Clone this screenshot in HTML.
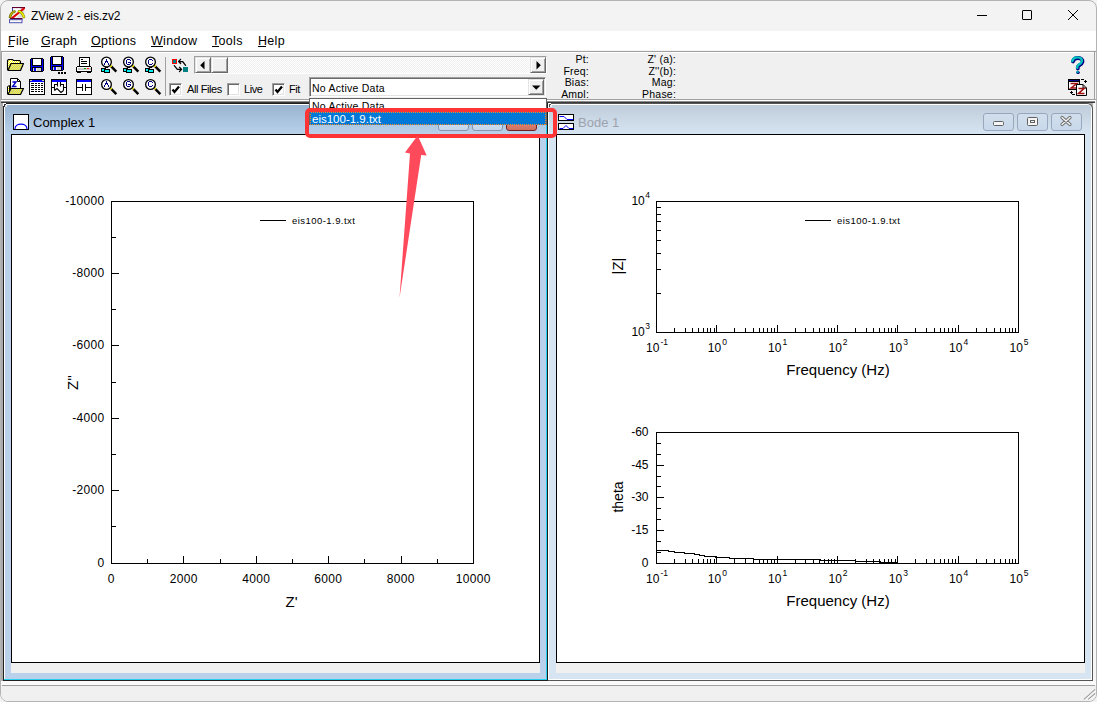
<!DOCTYPE html>
<html><head><meta charset="utf-8">
<style>
*{margin:0;padding:0;box-sizing:border-box}
html,body{width:1097px;height:702px;overflow:hidden;background:#f2f4f4;font-family:"Liberation Sans",sans-serif;position:relative}
.a{position:absolute}
.t11{font-size:11px;color:#000;white-space:nowrap;line-height:13px;letter-spacing:-0.4px}
.menu{font-size:12.5px;color:#000;white-space:nowrap;line-height:15px;letter-spacing:0.3px}
.ul{position:absolute;height:1px;background:#000}
svg{position:absolute;left:0;top:0;overflow:visible}
.cb{position:absolute;width:13px;height:13px;background:#fff;border-top:1px solid #a0a0a0;border-left:1px solid #a0a0a0;border-right:1px solid #fff;border-bottom:1px solid #fff;box-shadow:inset 1px 1px 0 #696969,inset -1px -1px 0 #e3e3e3}
.btn3d{position:absolute;background:#f0f0f0;border-top:1px solid #e3e3e3;border-left:1px solid #e3e3e3;border-right:1px solid #696969;border-bottom:1px solid #696969;box-shadow:inset 1px 1px 0 #fff,inset -1px -1px 0 #a0a0a0}
.il{letter-spacing:0.2px;font-size:10.5px}
.tbtn{position:absolute;top:10px;width:31px;height:18px;border:1px solid #8797b0;border-radius:3px;background:linear-gradient(#d6e2f0,#c5d6ea)}
</style></head><body>
<!-- main window -->
<div class="a" style="left:0;top:0;width:1097px;height:702px;border:1px solid #b4b4b4;border-radius:8px;background:#f3f3f3;overflow:hidden">
</div>
<!-- title bar -->
<svg width="17" height="17" style="left:9px;top:7px" viewBox="0 0 17 17">
  <rect x="3" y="0" width="13" height="1.3" fill="#600030"/>
  <rect x="3.5" y="1.3" width="8" height="2.4" fill="#fff"/>
  <rect x="3" y="1" width="1" height="3.5" fill="#4040a0"/>
  <path d="M16,1.5 L8,10.5 L15,10.5 L15.5,2 Z" fill="#d8d8d8"/>
  <line x1="15.5" y1="1" x2="2" y2="12" stroke="#e00000" stroke-width="2.2"/>
  <rect x="1" y="11" width="12.5" height="1.7" fill="#600030"/>
  <rect x="0.5" y="12.7" width="12.5" height="3" fill="#fff" stroke="#5050b0" stroke-width="1"/>
  <path d="M1,10 Q2.5,5 5.5,4.5" fill="none" stroke="#606000" stroke-width="2.6" stroke-linecap="round"/>
  <path d="M1,10 Q2.5,5 5.5,4.5" fill="none" stroke="#b8b000" stroke-width="1.4" stroke-linecap="round"/>
  <path d="M10,4.3 Q13,5 15,10" fill="none" stroke="#808000" stroke-width="2.6" stroke-linecap="round"/>
  <path d="M10,4.3 Q13,5 15,10" fill="none" stroke="#f0f000" stroke-width="1.6" stroke-linecap="round"/>
</svg>
<div class="a" style="left:31px;top:8px;font-size:12px;color:#000;white-space:nowrap;line-height:15px;letter-spacing:-0.1px;margin-top:1px">ZView 2 - eis.zv2</div>
<div class="a" style="left:977px;top:15px;width:10px;height:1px;background:#000"></div>
<div class="a" style="left:1022px;top:10px;width:10px;height:10px;border:1px solid #000;border-radius:1px"></div>
<svg width="12" height="12" style="left:1067px;top:9px" viewBox="0 0 12 12"><path d="M1,1 L11,11 M11,1 L1,11" stroke="#000" stroke-width="1"/></svg>

<!-- menu bar -->
<div class="a" style="left:1px;top:31px;width:1095px;height:20px;background:#fff"></div>
<div class="a menu" style="left:8px;top:34px">File</div><div class="ul" style="left:8px;top:46px;width:6px"></div>
<div class="a menu" style="left:41px;top:34px">Graph</div><div class="ul" style="left:41px;top:46px;width:9px"></div>
<div class="a menu" style="left:91px;top:34px">Options</div><div class="ul" style="left:91px;top:46px;width:10px"></div>
<div class="a menu" style="left:151px;top:34px">Window</div><div class="ul" style="left:151px;top:46px;width:12px"></div>
<div class="a menu" style="left:212px;top:34px">Tools</div><div class="ul" style="left:212px;top:46px;width:7px"></div>
<div class="a menu" style="left:258px;top:34px">Help</div><div class="ul" style="left:258px;top:46px;width:8px"></div>

<!-- toolbar -->
<div class="a" style="left:1px;top:51px;width:1095px;height:1px;background:#a0a0a0"></div>
<div class="a" style="left:1px;top:50px;width:1095px;height:1px;background:#f4f4f4"></div>
<div class="a" style="left:1px;top:52px;width:1094px;height:47px;background:#f0f0f0"></div>
<div class="a" style="left:2px;top:52px;width:1092px;height:1px;background:#fff"></div>
<div class="a" style="left:1px;top:51px;width:1px;height:49px;background:#a0a0a0"></div>
<div class="a" style="left:2px;top:52px;width:1px;height:47px;background:#fff"></div>
<div class="a" style="left:1094px;top:51px;width:1px;height:49px;background:#a0a0a0"></div>
<div class="a" style="left:1px;top:99px;width:1095px;height:1px;background:#a0a0a0"></div>
<div class="a" style="left:1px;top:100px;width:1095px;height:1px;background:#fff"></div>
<div class="a" style="left:1px;top:101px;width:1094px;height:1px;background:#8c8c8c"></div>
<div class="a" style="left:1px;top:102px;width:1094px;height:1px;background:#3a3a3a"></div>
<div class="a" style="left:165px;top:57px;width:1px;height:39px;background:#a0a0a0"></div>

<!-- MDI background -->
<div class="a" style="left:1px;top:103px;width:1095px;height:578px;background:#ababab"></div>

<!-- status bar -->
<div class="a" style="left:1px;top:681px;width:1095px;height:20px;background:#f0f0f0;border-radius:0 0 7px 7px"></div>
<div class="a" style="left:1px;top:681px;width:1095px;height:4px;background:#fafafa"></div>
<div class="a" style="left:2px;top:685px;width:1093px;height:1px;background:#a0a0a0"></div>
<svg width="14" height="14" style="left:1083px;top:687px" viewBox="0 0 14 14">
  <path d="M1,12.3 L12.2,2.3 M5.2,12.3 L12.2,6.5" stroke="#9a9a9a" stroke-width="1.1"/>
  <path d="M2,12.8 L12.6,3.3 M6.2,12.8 L12.6,7.5" stroke="#fff" stroke-width="0.7"/>
</svg>
<div class="a" style="left:1093px;top:103px;width:3px;height:578px;background:#f6f6f6"></div>
<!--WINDOWS-->
<!-- Complex 1 window (active) -->
<div class="a" style="left:3px;top:103px;width:545px;height:578px;background:#202020"></div>
<div class="a" style="left:4px;top:104px;width:543px;height:576px;background:#26d0f0"></div>
<div class="a" style="left:4px;top:104px;width:542px;height:575px;background:#fff"></div>
<div class="a" style="left:5px;top:105px;width:541px;height:574px;background:#b9d1ea"></div>
<div class="a" style="left:5px;top:105px;width:541px;height:29px;background:linear-gradient(#99b4d1,#b9d1ea)"></div>
<svg width="4" height="4" style="left:3px;top:103px" viewBox="0 0 4 4" shape-rendering="crispEdges"><rect x="0" y="0" width="3" height="1" fill="#fff"/><rect x="0" y="1" width="1" height="2" fill="#fff"/><rect x="1" y="1" width="2" height="1" fill="#303030"/><rect x="1" y="2" width="1" height="2" fill="#303030"/><rect x="2" y="2" width="2" height="2" fill="#dfe8f2"/></svg>
<div class="a" style="left:11px;top:134px;width:529px;height:529px;background:#fff;border:1px solid #000"></div>
<div class="a" style="left:11px;top:663px;width:529px;height:10px;background:#f0f0f0"></div>
<svg width="16" height="16" style="left:13px;top:114px" viewBox="0 0 16 16">
  <rect x="0.5" y="0.5" width="15" height="15" fill="#fff" stroke="#000" stroke-width="1"/>
  <path d="M2,15 C2,8.5 14,8.5 14,15" fill="none" stroke="#0000ff" stroke-width="1.2"/>
</svg>
<div class="a" style="left:33px;top:115px;font-size:13px;line-height:15px;color:#000;white-space:nowrap">Complex 1</div>
<div class="tbtn" style="left:438px;top:113px"></div>
<div class="tbtn" style="left:472px;top:113px"></div>
<div class="tbtn" style="left:506px;top:113px;border-color:#6e2020;background:linear-gradient(#e8a090,#d07060)"></div>

<!-- Bode 1 window (inactive) -->
<div class="a" style="left:548px;top:103px;width:545px;height:578px;background:#555;border-top-right-radius:6px"></div>
<div class="a" style="left:548px;top:104px;width:544px;height:576px;background:#fff;border-top-right-radius:5px"></div>
<div class="a" style="left:549px;top:105px;width:542px;height:574px;background:#d7e4f2;border-top-right-radius:4px"></div>
<div class="a" style="left:549px;top:105px;width:542px;height:29px;background:linear-gradient(#bfcddb,#d7e4f2);border-top-right-radius:4px"></div>
<svg width="4" height="4" style="left:548px;top:103px" viewBox="0 0 4 4" shape-rendering="crispEdges"><rect x="0" y="0" width="3" height="1" fill="#fff"/><rect x="0" y="1" width="1" height="2" fill="#fff"/><rect x="1" y="1" width="2" height="1" fill="#505050"/><rect x="1" y="2" width="1" height="2" fill="#505050"/><rect x="2" y="2" width="2" height="2" fill="#e8eef6"/></svg>
<div class="a" style="left:556px;top:134px;width:529px;height:529px;background:#fff;border:1px solid #000"></div>
<div class="a" style="left:556px;top:663px;width:529px;height:10px;background:#f0f0f0"></div>
<svg width="16" height="16" style="left:558px;top:114px" viewBox="0 0 16 16" shape-rendering="crispEdges">
  <rect x="0.5" y="0.5" width="15" height="6" fill="#fff" stroke="#000"/>
  <rect x="0.5" y="9.5" width="15" height="6" fill="#fff" stroke="#000"/>
  <path d="M1.5,2.5 L6,2.5 L9,5.5 L15,5.5" fill="none" stroke="#0000ff" stroke-width="1" shape-rendering="auto"/>
  <path d="M1.5,14.5 L5,14.5 L8,11.5 L11,14.5 L15,14.5" fill="none" stroke="#0000ff" stroke-width="1" shape-rendering="auto"/>
</svg>
<div class="a" style="left:578px;top:115px;font-size:13px;line-height:15px;color:#9ca3ad;white-space:nowrap">Bode 1</div>
<div class="tbtn" style="left:983px;top:113px;opacity:.75"></div>
<div class="tbtn" style="left:1017px;top:113px;opacity:.75"></div>
<div class="tbtn" style="left:1051px;top:113px;opacity:.75"></div>
<div class="a" style="left:993px;top:121px;width:11px;height:5px;border:1px solid #606060;border-radius:1.5px;background:#f4f4f4"></div>
<div class="a" style="left:1027px;top:117px;width:11px;height:9px;border:1px solid #606060;border-radius:1.5px;background:#f4f4f4"><div class="a" style="left:2px;top:2px;width:5px;height:3px;border:1px solid #606060"></div></div>
<svg width="12" height="10" style="left:1060px;top:116px" viewBox="0 0 12 10"><path d="M2,1.5 L10,8.5 M10,1.5 L2,8.5" stroke="#6a6a6a" stroke-width="3.2" stroke-linecap="round"/><path d="M2,1.5 L10,8.5 M10,1.5 L2,8.5" stroke="#f6f6f6" stroke-width="1.4" stroke-linecap="round"/></svg>

<!--PLOTS-->
<svg width="1097" height="702" viewBox="0 0 1097 702" style="left:0;top:0" font-family="Liberation Sans, sans-serif">
<g shape-rendering="crispEdges">
<rect x="111.5" y="201.5" width="362" height="362" fill="none" stroke="#000"/>
<line x1="147.5" y1="563" x2="147.5" y2="559" stroke="#000" stroke-width="1"/>
<line x1="111" y1="526.5" x2="116" y2="526.5" stroke="#000" stroke-width="1"/>
<line x1="183.5" y1="563" x2="183.5" y2="556" stroke="#000" stroke-width="1"/>
<line x1="111" y1="490.5" x2="119" y2="490.5" stroke="#000" stroke-width="1"/>
<line x1="220.5" y1="563" x2="220.5" y2="559" stroke="#000" stroke-width="1"/>
<line x1="111" y1="454.5" x2="116" y2="454.5" stroke="#000" stroke-width="1"/>
<line x1="256.5" y1="563" x2="256.5" y2="556" stroke="#000" stroke-width="1"/>
<line x1="111" y1="418.5" x2="119" y2="418.5" stroke="#000" stroke-width="1"/>
<line x1="292.5" y1="563" x2="292.5" y2="559" stroke="#000" stroke-width="1"/>
<line x1="111" y1="382.5" x2="116" y2="382.5" stroke="#000" stroke-width="1"/>
<line x1="328.5" y1="563" x2="328.5" y2="556" stroke="#000" stroke-width="1"/>
<line x1="111" y1="345.5" x2="119" y2="345.5" stroke="#000" stroke-width="1"/>
<line x1="364.5" y1="563" x2="364.5" y2="559" stroke="#000" stroke-width="1"/>
<line x1="111" y1="309.5" x2="116" y2="309.5" stroke="#000" stroke-width="1"/>
<line x1="401.5" y1="563" x2="401.5" y2="556" stroke="#000" stroke-width="1"/>
<line x1="111" y1="273.5" x2="119" y2="273.5" stroke="#000" stroke-width="1"/>
<line x1="437.5" y1="563" x2="437.5" y2="559" stroke="#000" stroke-width="1"/>
<line x1="111" y1="237.5" x2="116" y2="237.5" stroke="#000" stroke-width="1"/>
</g>
<g fill="#000">
<text x="111.3" y="583" font-size="12" text-anchor="middle" letter-spacing="0.3">0</text>
<text x="104.5" y="567" font-size="12" text-anchor="end" letter-spacing="0.3">0</text>
<text x="183.8" y="583" font-size="12" text-anchor="middle" letter-spacing="0.3">2000</text>
<text x="104.5" y="494" font-size="12" text-anchor="end" letter-spacing="0.3">-2000</text>
<text x="256.3" y="583" font-size="12" text-anchor="middle" letter-spacing="0.3">4000</text>
<text x="104.5" y="422" font-size="12" text-anchor="end" letter-spacing="0.3">-4000</text>
<text x="328.3" y="583" font-size="12" text-anchor="middle" letter-spacing="0.3">6000</text>
<text x="104.5" y="349" font-size="12" text-anchor="end" letter-spacing="0.3">-6000</text>
<text x="400.8" y="583" font-size="12" text-anchor="middle" letter-spacing="0.3">8000</text>
<text x="104.5" y="277" font-size="12" text-anchor="end" letter-spacing="0.3">-8000</text>
<text x="473.3" y="583" font-size="12" text-anchor="middle" letter-spacing="0.3">10000</text>
<text x="104.5" y="205" font-size="12" text-anchor="end" letter-spacing="0.3">-10000</text>
<text x="291.5" y="607" font-size="15" text-anchor="middle" >Z'</text>
<text transform="translate(78,382.5) rotate(-90)" font-size="15" text-anchor="middle">Z''</text>
</g>
<g shape-rendering="crispEdges">
<line x1="260" y1="220.5" x2="286" y2="220.5" stroke="#000" stroke-width="1"/>
</g>
<text x="292" y="224" font-size="9.5" text-anchor="start" letter-spacing="0.45">eis100-1.9.txt</text>
<g shape-rendering="crispEdges">
<rect x="656.5" y="201.5" width="362" height="131" fill="none" stroke="#000"/>
<line x1="674.5" y1="332" x2="674.5" y2="328" stroke="#000" stroke-width="1"/>
<line x1="685.5" y1="332" x2="685.5" y2="328" stroke="#000" stroke-width="1"/>
<line x1="692.5" y1="332" x2="692.5" y2="328" stroke="#000" stroke-width="1"/>
<line x1="698.5" y1="332" x2="698.5" y2="328" stroke="#000" stroke-width="1"/>
<line x1="703.5" y1="332" x2="703.5" y2="328" stroke="#000" stroke-width="1"/>
<line x1="707.5" y1="332" x2="707.5" y2="328" stroke="#000" stroke-width="1"/>
<line x1="710.5" y1="332" x2="710.5" y2="328" stroke="#000" stroke-width="1"/>
<line x1="714.5" y1="332" x2="714.5" y2="328" stroke="#000" stroke-width="1"/>
<line x1="716.5" y1="332" x2="716.5" y2="325" stroke="#000" stroke-width="1"/>
<line x1="734.5" y1="332" x2="734.5" y2="328" stroke="#000" stroke-width="1"/>
<line x1="745.5" y1="332" x2="745.5" y2="328" stroke="#000" stroke-width="1"/>
<line x1="753.5" y1="332" x2="753.5" y2="328" stroke="#000" stroke-width="1"/>
<line x1="759.5" y1="332" x2="759.5" y2="328" stroke="#000" stroke-width="1"/>
<line x1="763.5" y1="332" x2="763.5" y2="328" stroke="#000" stroke-width="1"/>
<line x1="767.5" y1="332" x2="767.5" y2="328" stroke="#000" stroke-width="1"/>
<line x1="771.5" y1="332" x2="771.5" y2="328" stroke="#000" stroke-width="1"/>
<line x1="774.5" y1="332" x2="774.5" y2="328" stroke="#000" stroke-width="1"/>
<line x1="777.5" y1="332" x2="777.5" y2="325" stroke="#000" stroke-width="1"/>
<line x1="795.5" y1="332" x2="795.5" y2="328" stroke="#000" stroke-width="1"/>
<line x1="805.5" y1="332" x2="805.5" y2="328" stroke="#000" stroke-width="1"/>
<line x1="813.5" y1="332" x2="813.5" y2="328" stroke="#000" stroke-width="1"/>
<line x1="819.5" y1="332" x2="819.5" y2="328" stroke="#000" stroke-width="1"/>
<line x1="824.5" y1="332" x2="824.5" y2="328" stroke="#000" stroke-width="1"/>
<line x1="828.5" y1="332" x2="828.5" y2="328" stroke="#000" stroke-width="1"/>
<line x1="831.5" y1="332" x2="831.5" y2="328" stroke="#000" stroke-width="1"/>
<line x1="834.5" y1="332" x2="834.5" y2="328" stroke="#000" stroke-width="1"/>
<line x1="837.5" y1="332" x2="837.5" y2="325" stroke="#000" stroke-width="1"/>
<line x1="855.5" y1="332" x2="855.5" y2="328" stroke="#000" stroke-width="1"/>
<line x1="866.5" y1="332" x2="866.5" y2="328" stroke="#000" stroke-width="1"/>
<line x1="873.5" y1="332" x2="873.5" y2="328" stroke="#000" stroke-width="1"/>
<line x1="879.5" y1="332" x2="879.5" y2="328" stroke="#000" stroke-width="1"/>
<line x1="884.5" y1="332" x2="884.5" y2="328" stroke="#000" stroke-width="1"/>
<line x1="888.5" y1="332" x2="888.5" y2="328" stroke="#000" stroke-width="1"/>
<line x1="891.5" y1="332" x2="891.5" y2="328" stroke="#000" stroke-width="1"/>
<line x1="895.5" y1="332" x2="895.5" y2="328" stroke="#000" stroke-width="1"/>
<line x1="897.5" y1="332" x2="897.5" y2="325" stroke="#000" stroke-width="1"/>
<line x1="915.5" y1="332" x2="915.5" y2="328" stroke="#000" stroke-width="1"/>
<line x1="926.5" y1="332" x2="926.5" y2="328" stroke="#000" stroke-width="1"/>
<line x1="934.5" y1="332" x2="934.5" y2="328" stroke="#000" stroke-width="1"/>
<line x1="940.5" y1="332" x2="940.5" y2="328" stroke="#000" stroke-width="1"/>
<line x1="944.5" y1="332" x2="944.5" y2="328" stroke="#000" stroke-width="1"/>
<line x1="948.5" y1="332" x2="948.5" y2="328" stroke="#000" stroke-width="1"/>
<line x1="952.5" y1="332" x2="952.5" y2="328" stroke="#000" stroke-width="1"/>
<line x1="955.5" y1="332" x2="955.5" y2="328" stroke="#000" stroke-width="1"/>
<line x1="958.5" y1="332" x2="958.5" y2="325" stroke="#000" stroke-width="1"/>
<line x1="976.5" y1="332" x2="976.5" y2="328" stroke="#000" stroke-width="1"/>
<line x1="986.5" y1="332" x2="986.5" y2="328" stroke="#000" stroke-width="1"/>
<line x1="994.5" y1="332" x2="994.5" y2="328" stroke="#000" stroke-width="1"/>
<line x1="1000.5" y1="332" x2="1000.5" y2="328" stroke="#000" stroke-width="1"/>
<line x1="1005.5" y1="332" x2="1005.5" y2="328" stroke="#000" stroke-width="1"/>
<line x1="1009.5" y1="332" x2="1009.5" y2="328" stroke="#000" stroke-width="1"/>
<line x1="1012.5" y1="332" x2="1012.5" y2="328" stroke="#000" stroke-width="1"/>
<line x1="1015.5" y1="332" x2="1015.5" y2="328" stroke="#000" stroke-width="1"/>
</g>
<text x="657.0" y="352" font-size="12" text-anchor="middle">10<tspan font-size="8.5" dy="-7" dx="1">-1</tspan></text>
<text x="717.3333333333334" y="352" font-size="12" text-anchor="middle">10<tspan font-size="8.5" dy="-7" dx="1">0</tspan></text>
<text x="777.6666666666666" y="352" font-size="12" text-anchor="middle">10<tspan font-size="8.5" dy="-7" dx="1">1</tspan></text>
<text x="838.0" y="352" font-size="12" text-anchor="middle">10<tspan font-size="8.5" dy="-7" dx="1">2</tspan></text>
<text x="898.3333333333334" y="352" font-size="12" text-anchor="middle">10<tspan font-size="8.5" dy="-7" dx="1">3</tspan></text>
<text x="958.6666666666667" y="352" font-size="12" text-anchor="middle">10<tspan font-size="8.5" dy="-7" dx="1">4</tspan></text>
<text x="1019.0" y="352" font-size="12" text-anchor="middle">10<tspan font-size="8.5" dy="-7" dx="1">5</tspan></text>
<text x="838" y="375" font-size="15" text-anchor="middle" >Frequency (Hz)</text>
<g shape-rendering="crispEdges">
<rect x="656.5" y="432.5" width="362" height="131" fill="none" stroke="#000"/>
<line x1="674.5" y1="563" x2="674.5" y2="559" stroke="#000" stroke-width="1"/>
<line x1="685.5" y1="563" x2="685.5" y2="559" stroke="#000" stroke-width="1"/>
<line x1="692.5" y1="563" x2="692.5" y2="559" stroke="#000" stroke-width="1"/>
<line x1="698.5" y1="563" x2="698.5" y2="559" stroke="#000" stroke-width="1"/>
<line x1="703.5" y1="563" x2="703.5" y2="559" stroke="#000" stroke-width="1"/>
<line x1="707.5" y1="563" x2="707.5" y2="559" stroke="#000" stroke-width="1"/>
<line x1="710.5" y1="563" x2="710.5" y2="559" stroke="#000" stroke-width="1"/>
<line x1="714.5" y1="563" x2="714.5" y2="559" stroke="#000" stroke-width="1"/>
<line x1="716.5" y1="563" x2="716.5" y2="556" stroke="#000" stroke-width="1"/>
<line x1="734.5" y1="563" x2="734.5" y2="559" stroke="#000" stroke-width="1"/>
<line x1="745.5" y1="563" x2="745.5" y2="559" stroke="#000" stroke-width="1"/>
<line x1="753.5" y1="563" x2="753.5" y2="559" stroke="#000" stroke-width="1"/>
<line x1="759.5" y1="563" x2="759.5" y2="559" stroke="#000" stroke-width="1"/>
<line x1="763.5" y1="563" x2="763.5" y2="559" stroke="#000" stroke-width="1"/>
<line x1="767.5" y1="563" x2="767.5" y2="559" stroke="#000" stroke-width="1"/>
<line x1="771.5" y1="563" x2="771.5" y2="559" stroke="#000" stroke-width="1"/>
<line x1="774.5" y1="563" x2="774.5" y2="559" stroke="#000" stroke-width="1"/>
<line x1="777.5" y1="563" x2="777.5" y2="556" stroke="#000" stroke-width="1"/>
<line x1="795.5" y1="563" x2="795.5" y2="559" stroke="#000" stroke-width="1"/>
<line x1="805.5" y1="563" x2="805.5" y2="559" stroke="#000" stroke-width="1"/>
<line x1="813.5" y1="563" x2="813.5" y2="559" stroke="#000" stroke-width="1"/>
<line x1="819.5" y1="563" x2="819.5" y2="559" stroke="#000" stroke-width="1"/>
<line x1="824.5" y1="563" x2="824.5" y2="559" stroke="#000" stroke-width="1"/>
<line x1="828.5" y1="563" x2="828.5" y2="559" stroke="#000" stroke-width="1"/>
<line x1="831.5" y1="563" x2="831.5" y2="559" stroke="#000" stroke-width="1"/>
<line x1="834.5" y1="563" x2="834.5" y2="559" stroke="#000" stroke-width="1"/>
<line x1="837.5" y1="563" x2="837.5" y2="556" stroke="#000" stroke-width="1"/>
<line x1="855.5" y1="563" x2="855.5" y2="559" stroke="#000" stroke-width="1"/>
<line x1="866.5" y1="563" x2="866.5" y2="559" stroke="#000" stroke-width="1"/>
<line x1="873.5" y1="563" x2="873.5" y2="559" stroke="#000" stroke-width="1"/>
<line x1="879.5" y1="563" x2="879.5" y2="559" stroke="#000" stroke-width="1"/>
<line x1="884.5" y1="563" x2="884.5" y2="559" stroke="#000" stroke-width="1"/>
<line x1="888.5" y1="563" x2="888.5" y2="559" stroke="#000" stroke-width="1"/>
<line x1="891.5" y1="563" x2="891.5" y2="559" stroke="#000" stroke-width="1"/>
<line x1="895.5" y1="563" x2="895.5" y2="559" stroke="#000" stroke-width="1"/>
<line x1="897.5" y1="563" x2="897.5" y2="556" stroke="#000" stroke-width="1"/>
<line x1="915.5" y1="563" x2="915.5" y2="559" stroke="#000" stroke-width="1"/>
<line x1="926.5" y1="563" x2="926.5" y2="559" stroke="#000" stroke-width="1"/>
<line x1="934.5" y1="563" x2="934.5" y2="559" stroke="#000" stroke-width="1"/>
<line x1="940.5" y1="563" x2="940.5" y2="559" stroke="#000" stroke-width="1"/>
<line x1="944.5" y1="563" x2="944.5" y2="559" stroke="#000" stroke-width="1"/>
<line x1="948.5" y1="563" x2="948.5" y2="559" stroke="#000" stroke-width="1"/>
<line x1="952.5" y1="563" x2="952.5" y2="559" stroke="#000" stroke-width="1"/>
<line x1="955.5" y1="563" x2="955.5" y2="559" stroke="#000" stroke-width="1"/>
<line x1="958.5" y1="563" x2="958.5" y2="556" stroke="#000" stroke-width="1"/>
<line x1="976.5" y1="563" x2="976.5" y2="559" stroke="#000" stroke-width="1"/>
<line x1="986.5" y1="563" x2="986.5" y2="559" stroke="#000" stroke-width="1"/>
<line x1="994.5" y1="563" x2="994.5" y2="559" stroke="#000" stroke-width="1"/>
<line x1="1000.5" y1="563" x2="1000.5" y2="559" stroke="#000" stroke-width="1"/>
<line x1="1005.5" y1="563" x2="1005.5" y2="559" stroke="#000" stroke-width="1"/>
<line x1="1009.5" y1="563" x2="1009.5" y2="559" stroke="#000" stroke-width="1"/>
<line x1="1012.5" y1="563" x2="1012.5" y2="559" stroke="#000" stroke-width="1"/>
<line x1="1015.5" y1="563" x2="1015.5" y2="559" stroke="#000" stroke-width="1"/>
</g>
<text x="657.0" y="583" font-size="12" text-anchor="middle">10<tspan font-size="8.5" dy="-7" dx="1">-1</tspan></text>
<text x="717.3333333333334" y="583" font-size="12" text-anchor="middle">10<tspan font-size="8.5" dy="-7" dx="1">0</tspan></text>
<text x="777.6666666666666" y="583" font-size="12" text-anchor="middle">10<tspan font-size="8.5" dy="-7" dx="1">1</tspan></text>
<text x="838.0" y="583" font-size="12" text-anchor="middle">10<tspan font-size="8.5" dy="-7" dx="1">2</tspan></text>
<text x="898.3333333333334" y="583" font-size="12" text-anchor="middle">10<tspan font-size="8.5" dy="-7" dx="1">3</tspan></text>
<text x="958.6666666666667" y="583" font-size="12" text-anchor="middle">10<tspan font-size="8.5" dy="-7" dx="1">4</tspan></text>
<text x="1019.0" y="583" font-size="12" text-anchor="middle">10<tspan font-size="8.5" dy="-7" dx="1">5</tspan></text>
<text x="838" y="606" font-size="15" text-anchor="middle" >Frequency (Hz)</text>
<g shape-rendering="crispEdges">
<line x1="656" y1="293.5" x2="661" y2="293.5" stroke="#000" stroke-width="1"/>
<line x1="656" y1="269.5" x2="661" y2="269.5" stroke="#000" stroke-width="1"/>
<line x1="656" y1="253.5" x2="661" y2="253.5" stroke="#000" stroke-width="1"/>
<line x1="656" y1="240.5" x2="661" y2="240.5" stroke="#000" stroke-width="1"/>
<line x1="656" y1="230.5" x2="661" y2="230.5" stroke="#000" stroke-width="1"/>
<line x1="656" y1="221.5" x2="661" y2="221.5" stroke="#000" stroke-width="1"/>
<line x1="656" y1="214.5" x2="661" y2="214.5" stroke="#000" stroke-width="1"/>
<line x1="656" y1="207.5" x2="661" y2="207.5" stroke="#000" stroke-width="1"/>
</g>
<text x="650" y="336" font-size="12" text-anchor="end">10<tspan font-size="8.5" dy="-7" dx="0.5">3</tspan></text>
<text x="650" y="205" font-size="12" text-anchor="end">10<tspan font-size="8.5" dy="-7" dx="0.5">4</tspan></text>
<text transform="translate(623,266) rotate(-90)" font-size="15" text-anchor="middle">|Z|</text>
<g shape-rendering="crispEdges">
<line x1="805" y1="220.5" x2="831" y2="220.5" stroke="#000" stroke-width="1"/>
</g>
<text x="837" y="224" font-size="9.5" text-anchor="start" letter-spacing="0.45">eis100-1.9.txt</text>
<g shape-rendering="crispEdges">
<line x1="656" y1="552.5" x2="661" y2="552.5" stroke="#000" stroke-width="1"/>
<line x1="656" y1="541.5" x2="661" y2="541.5" stroke="#000" stroke-width="1"/>
<line x1="656" y1="530.5" x2="664" y2="530.5" stroke="#000" stroke-width="1"/>
<line x1="656" y1="519.5" x2="661" y2="519.5" stroke="#000" stroke-width="1"/>
<line x1="656" y1="508.5" x2="661" y2="508.5" stroke="#000" stroke-width="1"/>
<line x1="656" y1="497.5" x2="664" y2="497.5" stroke="#000" stroke-width="1"/>
<line x1="656" y1="486.5" x2="661" y2="486.5" stroke="#000" stroke-width="1"/>
<line x1="656" y1="476.5" x2="661" y2="476.5" stroke="#000" stroke-width="1"/>
<line x1="656" y1="465.5" x2="664" y2="465.5" stroke="#000" stroke-width="1"/>
<line x1="656" y1="454.5" x2="661" y2="454.5" stroke="#000" stroke-width="1"/>
<line x1="656" y1="443.5" x2="661" y2="443.5" stroke="#000" stroke-width="1"/>
</g>
<text x="648.5" y="567" font-size="12" text-anchor="end" >0</text>
<text x="648.5" y="534" font-size="12" text-anchor="end" >-15</text>
<text x="648.5" y="501" font-size="12" text-anchor="end" >-30</text>
<text x="648.5" y="469" font-size="12" text-anchor="end" >-45</text>
<text x="648.5" y="436" font-size="12" text-anchor="end" >-60</text>
<text transform="translate(623,497) rotate(-90)" font-size="14" text-anchor="middle">theta</text>
<path d="M656,550.5 L668,550.5 L668,551.5 L674,551.5 L674,552.5 L684,552.5 L684,553.5 L694,553.5 L694,554.5 L699,554.5 L699,555.5 L704,555.5 L704,556.5 L715,556.5 L715,557.5 L729,557.5 L729,558.5 L753,558.5 L753,559.5 L820,559.5 L820,560.5 L855,560.5 L855,561.5 L880,561.5 L880,562.5 L897,562.5" fill="none" stroke="#000" stroke-width="1" shape-rendering="crispEdges"/>
</svg>
<!--TOOLBAR-->
<!-- toolbar icons row 1 -->
<svg width="0" height="0" style="position:absolute"><defs>
<pattern id="py" width="2" height="2" patternUnits="userSpaceOnUse"><rect width="2" height="2" fill="#ffff00"/><rect width="1" height="1" fill="#fff"/><rect x="1" y="1" width="1" height="1" fill="#fff"/></pattern>
<pattern id="pg" width="2" height="2" patternUnits="userSpaceOnUse"><rect width="2" height="2" fill="#ffff00"/><rect width="1" height="1" fill="#c0c0c0"/><rect x="1" y="1" width="1" height="1" fill="#c0c0c0"/></pattern>
</defs></svg>
<svg width="18" height="13" style="left:7px;top:59px" viewBox="0 0 18 13">
  <path d="M0.5,11 V1.5 L1.5,0.5 H5.5 L6.5,1.5 H12.5 L13.5,2.5 V5" fill="url(#py)" stroke="#000" stroke-width="1.1"/>
  <path d="M1,11.5 L4,4.5 H16.5 L13.5,11.5 Z" fill="url(#pg)" stroke="#000" stroke-width="1.2" stroke-linejoin="round"/>
</svg>
<svg width="14" height="14" style="left:30px;top:58px" viewBox="0 0 14 14" shape-rendering="crispEdges">
  <path d="M1,0 H13 V1 H14 V13 H13 V14 H1 V13 H0 V1 H1 Z" fill="#000"/>
  <rect x="1" y="1" width="12" height="12" fill="#0000ff"/>
  <rect x="2" y="0" width="10" height="8" fill="#000"/>
  <rect x="3" y="1" width="8" height="6" fill="#fff"/>
  <rect x="2" y="9" width="10" height="5" fill="#000"/>
  <rect x="3" y="10" width="8" height="3" fill="#d0d0d0"/>
  <rect x="4" y="10" width="2" height="3" fill="#0000ff"/>
  <rect x="6" y="10" width="1" height="3" fill="#fff"/>
</svg>
<svg width="17" height="18" style="left:50px;top:56px" viewBox="0 0 17 18" shape-rendering="crispEdges">
  <path d="M1,0 H13 V1 H14 V14 H13 V15 H1 V14 H0 V1 H1 Z" fill="#000"/>
  <rect x="1" y="1" width="12" height="13" fill="#0000ff"/>
  <rect x="2" y="0" width="10" height="9" fill="#000"/>
  <rect x="3" y="1" width="8" height="7" fill="#fff"/>
  <rect x="2" y="10" width="10" height="5" fill="#000"/>
  <rect x="3" y="11" width="8" height="3" fill="#d0d0d0"/>
  <rect x="4" y="11" width="2" height="3" fill="#0000ff"/>
  <rect x="6" y="11" width="1" height="3" fill="#fff"/>
  <rect x="8" y="16" width="2" height="2" fill="#000"/>
  <rect x="11" y="16" width="2" height="2" fill="#000"/>
  <rect x="14" y="16" width="2" height="2" fill="#000"/>
</svg>
<svg width="17" height="17" style="left:76px;top:57px" viewBox="0 0 17 17" shape-rendering="crispEdges">
  <rect x="3" y="0" width="11" height="10" fill="#000"/>
  <rect x="4" y="1" width="9" height="8" fill="#fff"/>
  <rect x="5" y="2" width="2" height="1" fill="#000"/>
  <rect x="5" y="4" width="6" height="1" fill="#000"/>
  <rect x="5" y="6" width="6" height="1" fill="#000"/>
  <path d="M1,9 H15 V10 H16 V15 H0 V10 H1 Z" fill="#000"/>
  <rect x="1" y="10" width="14" height="4" fill="#fff"/>
  <rect x="2" y="11" width="13" height="2" fill="#c8c8c8"/>
  <rect x="8" y="11" width="2" height="1" fill="#00a000"/>
  <rect x="11" y="11" width="2" height="1" fill="#ff2020"/>
  <rect x="1" y="15" width="4" height="1" fill="#000"/>
  <rect x="11" y="15" width="4" height="1" fill="#000"/>
</svg>
<!-- row 2 -->
<svg width="18" height="18" style="left:7px;top:78px" viewBox="0 0 18 18">
  <path d="M0.5,16 V8.5 L2.5,7.5 V14" fill="url(#py)" stroke="#000" stroke-width="1"/>
  <path d="M3.5,12 V0.5 H10.5 L13.5,3.5 V10" fill="#fff" stroke="#000" stroke-width="1"/>
  <path d="M10.5,0.5 V3.5 H13.5" fill="none" stroke="#000" stroke-width="1"/>
  <path d="M5.5,4 H9 L5.5,8.5 H9.5" fill="none" stroke="#0000c0" stroke-width="1.4"/>
  <path d="M1,16.5 L4,10.5 H16.5 L13.5,16.5 Z" fill="url(#pg)" stroke="#000" stroke-width="1.2" stroke-linejoin="round"/>
</svg>
<svg width="17" height="17" style="left:29px;top:79px" viewBox="0 0 17 17" shape-rendering="crispEdges">
  <rect x="0" y="0" width="16" height="16" fill="#000"/>
  <rect x="1" y="1" width="14" height="14" fill="#fff"/>
  <rect x="1" y="1" width="14" height="2" fill="#0000ff"/>
  <rect x="1" y="1" width="2" height="1" fill="#c8c8a0"/><rect x="13" y="1" width="2" height="1" fill="#c8c8a0"/>
  <rect x="2" y="4" width="13" height="1" fill="#000"/>
  <rect x="2" y="6" width="13" height="1" fill="#000"/>
  <rect x="2" y="8" width="13" height="1" fill="#000"/>
  <rect x="2" y="10" width="13" height="1" fill="#000"/>
  <rect x="2" y="12" width="13" height="1" fill="#000"/>
  <rect x="5" y="4" width="1" height="9" fill="#fff"/>
  <rect x="8" y="4" width="1" height="9" fill="#fff"/>
  <rect x="11" y="4" width="1" height="9" fill="#fff"/>
  <rect x="14" y="4" width="1" height="9" fill="#fff"/>
</svg>
<svg width="17" height="17" style="left:51px;top:79px" viewBox="0 0 17 17">
  <g shape-rendering="crispEdges"><rect x="0" y="0" width="16" height="16" fill="#000"/>
  <rect x="1" y="1" width="14" height="14" fill="#fff"/>
  <rect x="1" y="1" width="14" height="2" fill="#0000ff"/></g>
  <path d="M1,8.5 H3.5 M12.5,8.5 H15 M3.5,11.5 V5.5 H6.5 V3 M9.5,3 V5.5 H12.5 V11.5 M3.5,11.5 L6,9.5 L10,13.5 L12.5,11.5 M6.5,3 V7.5 M9.5,3 V7.5" fill="none" stroke="#000" stroke-width="1.1"/>
</svg>
<svg width="17" height="17" style="left:76px;top:79px" viewBox="0 0 17 17" shape-rendering="crispEdges">
  <rect x="0" y="0" width="16" height="16" fill="#000"/>
  <rect x="1" y="1" width="14" height="14" fill="#fff"/>
  <rect x="1" y="1" width="14" height="2" fill="#0000ff"/>
  <rect x="1" y="8" width="6" height="1" fill="#000"/>
  <rect x="9" y="8" width="6" height="1" fill="#000"/>
  <rect x="6" y="5" width="1" height="7" fill="#000"/>
  <rect x="9" y="5" width="1" height="7" fill="#000"/>
</svg>
<!-- link icon -->
<svg width="20" height="16" style="left:170px;top:57px" viewBox="170 57 20 16">
  <g shape-rendering="crispEdges"><rect x="172" y="59" width="5" height="5" fill="#ff0000"/><rect x="173" y="60" width="3" height="3" fill="#008080"/>
  <rect x="183" y="67" width="5" height="5" fill="#008080"/></g>
  <path d="M178.6,61.5 H182.6 L185.6,65.3 M180.6,59.3 L178.6,61.5 L180.6,63.5" fill="none" stroke="#000" stroke-width="1.25" stroke-linecap="round" stroke-linejoin="round"/>
  <path d="M174.3,65.6 L177.3,69.4 H181.6 M179.5,67.3 L181.6,69.4 L179.5,71.5" fill="none" stroke="#000" stroke-width="1.25" stroke-linecap="round" stroke-linejoin="round"/>
</svg>
<!-- scrollbar -->
<div class="a" style="left:194px;top:56px;width:353px;height:18px;border-top:1px solid #a0a0a0;border-left:1px solid #a0a0a0;border-bottom:1px solid #fff;border-right:1px solid #fff;background-color:#f8f8f8;background-image:repeating-conic-gradient(#f0f0f0 0 25%,#fff 0 50%);background-size:2px 2px"></div>
<div class="btn3d" style="left:195px;top:57px;width:16px;height:16px"></div>
<svg width="5" height="9" style="left:200px;top:61px" viewBox="0 0 5 9"><path d="M4.5,0 V8.5 L0.2,4.25 Z" fill="#000"/></svg>
<div class="btn3d" style="left:211px;top:57px;width:17px;height:16px"></div>
<div class="btn3d" style="left:530px;top:57px;width:16px;height:16px"></div>
<svg width="5" height="9" style="left:536px;top:61px" viewBox="0 0 5 9"><path d="M0.5,0 V8.5 L4.8,4.25 Z" fill="#000"/></svg>
<!-- checkboxes -->
<div class="cb" style="left:169px;top:83px"></div>
<svg width="11" height="11" style="left:170px;top:84px" viewBox="0 0 11 11"><path d="M2.5,5.5 L4.5,8 L9,2.5" fill="none" stroke="#000" stroke-width="2.3"/></svg>
<div class="a t11" style="left:187px;top:83px">All Files</div>
<div class="cb" style="left:227px;top:83px"></div>
<div class="a t11" style="left:244px;top:83px">Live</div>
<div class="cb" style="left:272px;top:83px"></div>
<svg width="11" height="11" style="left:273px;top:84px" viewBox="0 0 11 11"><path d="M2.5,5.5 L4.5,8 L9,2.5" fill="none" stroke="#000" stroke-width="2.3"/></svg>
<div class="a t11" style="left:289px;top:83px">Fit</div>
<!-- combobox -->
<div class="a" style="left:309px;top:77px;width:237px;height:20px;background:#fff;border-top:1px solid #a0a0a0;border-left:1px solid #a0a0a0;border-bottom:1px solid #fff;border-right:1px solid #fff;box-shadow:inset 1px 1px 0 #696969,inset -1px -1px 0 #e3e3e3"></div>
<div class="a t11" style="left:312px;top:82px;font-size:10.5px;letter-spacing:0.25px">No Active Data</div>
<div class="btn3d" style="left:528px;top:79px;width:16px;height:16px"></div>
<svg width="9" height="5" style="left:532px;top:85px" viewBox="0 0 9 5"><path d="M0,0.5 H8.5 L4.25,4.8 Z" fill="#000"/></svg>
<!-- info labels -->
<div class="a" style="left:500px;top:52px;width:200px;height:46px;overflow:hidden">
<div class="a t11 il" style="right:111px;top:1px">Pt:</div>
<div class="a t11 il" style="right:111px;top:13px">Freq:</div>
<div class="a t11 il" style="right:111px;top:24px">Bias:</div>
<div class="a t11 il" style="right:111px;top:36px">Ampl:</div>
<div class="a t11 il" style="right:24px;top:1px">Z' (a):</div>
<div class="a t11 il" style="right:24px;top:13px">Z''(b):</div>
<div class="a t11 il" style="right:24px;top:24px">Mag:</div>
<div class="a t11 il" style="right:24px;top:36px">Phase:</div>
</div>
<!-- help icons -->
<svg width="14" height="18" style="left:1071px;top:57px" viewBox="0 0 14 18">
  <path d="M2,4.5 Q3,0.8 7,1 Q12,1.3 11.5,4.8 Q11,7 8,8.5 Q6.5,9.5 6.8,11.5" fill="none" stroke="#000080" stroke-width="3.8" stroke-linecap="round"/>
  <path d="M2,4.5 Q3,0.8 7,1 Q12,1.3 11.5,4.8 Q11,7 8,8.5 Q6.5,9.5 6.8,11.5" fill="none" stroke="#00c0c0" stroke-width="2.4" stroke-linecap="round" transform="translate(-0.6,-0.6)"/>
  <ellipse cx="7" cy="15.5" rx="1.8" ry="1.6" fill="#000080"/>
  <ellipse cx="6.5" cy="15" rx="1.3" ry="1.1" fill="#00b8b8"/>
</svg>
<svg width="20" height="17" style="left:1068px;top:79px" viewBox="0 0 20 17" shape-rendering="crispEdges">
  <rect x="0" y="0" width="12" height="11" fill="#000"/>
  <rect x="1" y="3" width="10" height="7" fill="#fff"/>
  <rect x="1" y="1" width="10" height="1" fill="#000090"/>
  <path d="M2.5,4.5 H9 L3,9 H9.5" fill="none" stroke="#a01010" stroke-width="1.5" shape-rendering="auto"/>
  <path d="M8.5,5.5 H15 L18.5,9 V16.5 H8.5 Z" fill="#fff" stroke="#000" stroke-width="1" shape-rendering="auto"/>
  <path d="M15,5.5 V9 H18.5" fill="none" stroke="#000" stroke-width="1" shape-rendering="auto"/>
  <path d="M10.5,9.5 H16 L10.5,14.5 H16.5" fill="none" stroke="#a01010" stroke-width="1.6" shape-rendering="auto"/>
  <rect x="13" y="0" width="3" height="1" fill="#000"/><rect x="17" y="1" width="1" height="3" fill="#000"/><rect x="16" y="2" width="3" height="1" fill="#000"/>
  <rect x="3" y="12" width="1" height="3" fill="#000"/><rect x="2" y="13" width="3" height="1" fill="#000"/><rect x="4" y="15" width="3" height="1" fill="#000"/>
</svg>

<svg width="17" height="17" style="left:101px;top:56px" viewBox="0 0 17 17"><line x1="10.2" y1="10.3" x2="15.3" y2="15.6" stroke="#000" stroke-width="2.4"/><line x1="9.2" y1="9.3" x2="10.6" y2="10.7" stroke="#f0e800" stroke-width="2.2"/><circle cx="5.5" cy="6" r="4.85" fill="#fff" stroke="#000" stroke-width="1.3"/><g fill="#000080" shape-rendering="crispEdges"><rect x="5" y="3" width="1" height="1"/><rect x="5" y="4" width="1" height="1"/><rect x="4" y="5" width="1" height="1"/><rect x="5" y="5" width="1" height="1"/><rect x="6" y="5" width="1" height="1"/><rect x="4" y="6" width="1" height="1"/><rect x="6" y="6" width="1" height="1"/><rect x="3" y="7" width="1" height="1"/><rect x="7" y="7" width="1" height="1"/><rect x="3" y="8" width="1" height="1"/><rect x="7" y="8" width="1" height="1"/></g><g shape-rendering="crispEdges"><rect x="4" y="11" width="3" height="1" fill="#000"/><rect x="0" y="12" width="5" height="4" fill="#000"/><rect x="1" y="13" width="2" height="2" fill="#00f0f0"/><rect x="3" y="13" width="6" height="4" fill="#000"/><rect x="4" y="14" width="4" height="2" fill="#00f0f0"/></g></svg>
<svg width="17" height="17" style="left:101px;top:79px" viewBox="0 0 17 17"><line x1="10.2" y1="9.8" x2="15.3" y2="15.1" stroke="#000" stroke-width="2.4"/><line x1="9.2" y1="8.8" x2="10.6" y2="10.2" stroke="#f0e800" stroke-width="2.2"/><circle cx="5.5" cy="5.5" r="4.85" fill="#fff" stroke="#000" stroke-width="1.3"/><g fill="#000080" shape-rendering="crispEdges"><rect x="5" y="2" width="1" height="1"/><rect x="5" y="3" width="1" height="1"/><rect x="4" y="4" width="1" height="1"/><rect x="5" y="4" width="1" height="1"/><rect x="6" y="4" width="1" height="1"/><rect x="4" y="5" width="1" height="1"/><rect x="6" y="5" width="1" height="1"/><rect x="3" y="6" width="1" height="1"/><rect x="7" y="6" width="1" height="1"/><rect x="3" y="7" width="1" height="1"/><rect x="7" y="7" width="1" height="1"/></g></svg>
<svg width="17" height="17" style="left:123px;top:56px" viewBox="0 0 17 17"><line x1="10.2" y1="10.3" x2="15.3" y2="15.6" stroke="#000" stroke-width="2.4"/><line x1="9.2" y1="9.3" x2="10.6" y2="10.7" stroke="#f0e800" stroke-width="2.2"/><circle cx="5.5" cy="6" r="4.85" fill="#fff" stroke="#000" stroke-width="1.3"/><g fill="#000080" shape-rendering="crispEdges"><rect x="4" y="3" width="1" height="1"/><rect x="5" y="3" width="1" height="1"/><rect x="6" y="3" width="1" height="1"/><rect x="3" y="4" width="1" height="1"/><rect x="7" y="4" width="1" height="1"/><rect x="3" y="5" width="1" height="1"/><rect x="3" y="6" width="1" height="1"/><rect x="5" y="6" width="1" height="1"/><rect x="6" y="6" width="1" height="1"/><rect x="7" y="6" width="1" height="1"/><rect x="3" y="7" width="1" height="1"/><rect x="7" y="7" width="1" height="1"/><rect x="4" y="8" width="1" height="1"/><rect x="5" y="8" width="1" height="1"/><rect x="6" y="8" width="1" height="1"/></g><g shape-rendering="crispEdges"><rect x="4" y="11" width="3" height="1" fill="#000"/><rect x="0" y="12" width="5" height="4" fill="#000"/><rect x="1" y="13" width="2" height="2" fill="#00f0f0"/><rect x="3" y="13" width="6" height="4" fill="#000"/><rect x="4" y="14" width="4" height="2" fill="#00f0f0"/></g></svg>
<svg width="17" height="17" style="left:123px;top:79px" viewBox="0 0 17 17"><line x1="10.2" y1="9.8" x2="15.3" y2="15.1" stroke="#000" stroke-width="2.4"/><line x1="9.2" y1="8.8" x2="10.6" y2="10.2" stroke="#f0e800" stroke-width="2.2"/><circle cx="5.5" cy="5.5" r="4.85" fill="#fff" stroke="#000" stroke-width="1.3"/><g fill="#000080" shape-rendering="crispEdges"><rect x="4" y="2" width="1" height="1"/><rect x="5" y="2" width="1" height="1"/><rect x="6" y="2" width="1" height="1"/><rect x="3" y="3" width="1" height="1"/><rect x="7" y="3" width="1" height="1"/><rect x="3" y="4" width="1" height="1"/><rect x="3" y="5" width="1" height="1"/><rect x="5" y="5" width="1" height="1"/><rect x="6" y="5" width="1" height="1"/><rect x="7" y="5" width="1" height="1"/><rect x="3" y="6" width="1" height="1"/><rect x="7" y="6" width="1" height="1"/><rect x="4" y="7" width="1" height="1"/><rect x="5" y="7" width="1" height="1"/><rect x="6" y="7" width="1" height="1"/></g></svg>
<svg width="17" height="17" style="left:145px;top:56px" viewBox="0 0 17 17"><line x1="10.2" y1="10.3" x2="15.3" y2="15.6" stroke="#000" stroke-width="2.4"/><line x1="9.2" y1="9.3" x2="10.6" y2="10.7" stroke="#f0e800" stroke-width="2.2"/><circle cx="5.5" cy="6" r="4.85" fill="#fff" stroke="#000" stroke-width="1.3"/><g fill="#000080" shape-rendering="crispEdges"><rect x="4" y="3" width="1" height="1"/><rect x="5" y="3" width="1" height="1"/><rect x="6" y="3" width="1" height="1"/><rect x="3" y="4" width="1" height="1"/><rect x="7" y="4" width="1" height="1"/><rect x="3" y="5" width="1" height="1"/><rect x="3" y="6" width="1" height="1"/><rect x="3" y="7" width="1" height="1"/><rect x="7" y="7" width="1" height="1"/><rect x="4" y="8" width="1" height="1"/><rect x="5" y="8" width="1" height="1"/><rect x="6" y="8" width="1" height="1"/></g><g shape-rendering="crispEdges"><rect x="4" y="11" width="3" height="1" fill="#000"/><rect x="0" y="12" width="5" height="4" fill="#000"/><rect x="1" y="13" width="2" height="2" fill="#00f0f0"/><rect x="3" y="13" width="6" height="4" fill="#000"/><rect x="4" y="14" width="4" height="2" fill="#00f0f0"/></g></svg>
<svg width="17" height="17" style="left:145px;top:79px" viewBox="0 0 17 17"><line x1="10.2" y1="9.8" x2="15.3" y2="15.1" stroke="#000" stroke-width="2.4"/><line x1="9.2" y1="8.8" x2="10.6" y2="10.2" stroke="#f0e800" stroke-width="2.2"/><circle cx="5.5" cy="5.5" r="4.85" fill="#fff" stroke="#000" stroke-width="1.3"/><g fill="#000080" shape-rendering="crispEdges"><rect x="4" y="2" width="1" height="1"/><rect x="5" y="2" width="1" height="1"/><rect x="6" y="2" width="1" height="1"/><rect x="3" y="3" width="1" height="1"/><rect x="7" y="3" width="1" height="1"/><rect x="3" y="4" width="1" height="1"/><rect x="3" y="5" width="1" height="1"/><rect x="3" y="6" width="1" height="1"/><rect x="7" y="6" width="1" height="1"/><rect x="4" y="7" width="1" height="1"/><rect x="5" y="7" width="1" height="1"/><rect x="6" y="7" width="1" height="1"/></g></svg>
<!--DROPDOWN-->
<!-- dropdown list -->
<div class="a" style="left:309px;top:98px;width:238px;height:27px;background:#fff;border:1px solid #646464;border-bottom:none"></div>
<div class="a t11" style="left:312px;top:100px;font-size:10.5px;letter-spacing:0.25px">No Active Data</div>
<div class="a" style="left:310px;top:112px;width:236px;height:13px;background:#0078d7"></div>
<svg width="236" height="13" style="left:310px;top:112px" viewBox="0 0 236 13" shape-rendering="crispEdges"><rect x="0.5" y="0.5" width="235" height="12" fill="none" stroke="#ff8c1a" stroke-width="1" stroke-dasharray="1 1"/></svg>
<div class="a" style="left:312px;top:113px;font-size:11.5px;line-height:13px;color:#fff;white-space:nowrap;letter-spacing:0px">eis100-1.9.txt</div>
<!-- annotation -->
<div class="a" style="left:305px;top:108px;width:252px;height:30px;border:4px solid #ff3434;border-radius:5px"></div>
<svg width="1097" height="702" style="left:0;top:0" viewBox="0 0 1097 702">
  <path d="M417.7,135.5 L426.7,155.5 L421.2,155 L399.5,298 L410,153.5 L405,152.5 Z" fill="#ff4a5c"/>
</svg>

</body></html>
